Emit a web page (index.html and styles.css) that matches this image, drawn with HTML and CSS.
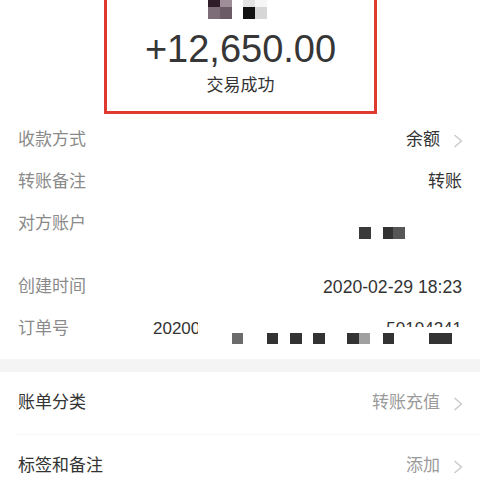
FILE: index.html
```html
<!DOCTYPE html>
<html lang="zh">
<head>
<meta charset="utf-8">
<title>账单详情</title>
<link rel="stylesheet" href="styles.css">
</head>
<body>
<div class="page">
  <header class="summary">
    <div class="card">
      <div class="avatar-row">
        <div class="mosaic mosaic-a"><i class="c1"></i><i class="c2"></i><i class="c3"></i><i class="c4"></i></div>
        <div class="mosaic mosaic-b"><i class="c1"></i><i class="c2"></i><i class="c3"></i><i class="c4"></i></div>
      </div>
      <div class="amount">+12,650.00</div>
      <div class="status">交易成功</div>
    </div>
  </header>

  <section class="details">
    <div class="row">
      <span class="label">收款方式</span>
      <span class="value-wrap"><span class="value">余额</span><svg class="chev" viewBox="0 0 10 14" width="10" height="14"><polyline points="1.5,1 8.5,7 1.5,13" fill="none" stroke="#c9c9c9" stroke-width="1.4"/></svg></span>
    </div>
    <div class="row plain">
      <span class="label">转账备注</span>
      <span class="value">转账</span>
    </div>
    <div class="row plain tall">
      <span class="label">对方账户</span>
      <span class="censor cx1"></span><span class="censor cx2"></span><span class="censor cx3"></span>
    </div>
    <div class="row plain">
      <span class="label">创建时间</span>
      <span class="value num date">2020-02-29 18:23</span>
    </div>
    <div class="row plain order">
      <span class="label order-label">订单号</span>
      <span class="order-head num">20200229</span>
      <span class="order-tail num">50104241</span>
      <span class="censor o1"></span><span class="censor o2"></span><span class="censor o3"></span><span class="censor o4"></span><span class="censor o5"></span><span class="censor o6"></span><span class="censor o7"></span><span class="censor o8"></span>
    </div>
  </section>

  <div class="band"></div>

  <section class="extras">
    <div class="row big divided">
      <span class="label dark">账单分类</span>
      <span class="value-wrap"><span class="value light">转账充值</span><svg class="chev" viewBox="0 0 10 14" width="10" height="14"><polyline points="1.5,1 8.5,7 1.5,13" fill="none" stroke="#c9c9c9" stroke-width="1.4"/></svg></span>
    </div>
    <div class="row big">
      <span class="label dark">标签和备注</span>
      <span class="value-wrap"><span class="value light">添加</span><svg class="chev" viewBox="0 0 10 14" width="10" height="14"><polyline points="1.5,1 8.5,7 1.5,13" fill="none" stroke="#c9c9c9" stroke-width="1.4"/></svg></span>
    </div>
  </section>
</div>
</body>
</html>
```

FILE: styles.css
```css
* { box-sizing: border-box; }
html, body { margin: 0; padding: 0; background: #fff; }
body {
  font-family: "Liberation Sans", "Noto Sans CJK SC", sans-serif;
  color: #333;
  width: 480px;
  overflow: hidden;
}
.page { width: 480px; }

.summary { display: flex; justify-content: center; }
.card {
  width: 273px;
  margin-left: 1px;
  border: 3px solid #df3a30;
  border-top: 0;
  padding-bottom: 13px;
  display: flex;
  flex-direction: column;
  align-items: center;
}
.avatar-row {
  display: flex;
  gap: 11px;
  height: 19px;
  padding-right: 6px;
}
.mosaic {
  display: grid;
  grid-template-columns: 12px 12px;
  grid-template-rows: 7px 12px;
}
.mosaic-a .c1 { background: #2f1e29; }
.mosaic-a .c2 { background: #9e8e98; }
.mosaic-a .c3 { background: #7d6d78; }
.mosaic-a .c4 { background: #6b5b66; }
.mosaic-b .c1 { background: #e2e2e2; }
.mosaic-b .c2 { background: #f6f6f6; }
.mosaic-b .c3 { background: #121212; }
.mosaic-b .c4 { background: #d6d6d6; }

.amount {
  margin-top: 8px;
  font-size: 38px;
  line-height: 44px;
  color: #363636;
}
.status {
  margin-top: 3px;
  font-size: 17px;
  line-height: 24px;
  color: #333;
}

.details { margin-top: 5px; }
.row {
  position: relative;
  display: flex;
  justify-content: space-between;
  align-items: flex-start;
  height: 42px;
  padding: 9px 17px 9px 18px;
  font-size: 17px;
  line-height: 24px;
}
.row.plain { padding-right: 18px; }
.row.tall { height: 63px; }
.row.order { height: 51px; justify-content: flex-start; }
.label { color: #8a8a8a; }
.label.dark { color: #333; }
.value { color: #333; }
.value.light { color: #9a9a9a; }
.value-wrap { display: flex; align-items: center; gap: 13px; }
.chev { display: block; margin-top: 1px; }
.num { font-family: "Liberation Sans", sans-serif; }
.date { font-size: 17.6px; }

.order-label { width: 135px; flex: none; }
.order-head {
  display: block;
  width: 45px;
  overflow: hidden;
  white-space: nowrap;
  color: #333;
}
.order-tail {
  display: block;
  margin-left: auto;
  height: 10px;
  overflow: hidden;
  color: #333;
}

.censor { position: absolute; height: 11px; background: #333; }
.cx1 { top: 24px; left: 359px; width: 12px; height: 12px; background: #3a3a3a; }
.cx2 { top: 24px; left: 383px; width: 10px; height: 12px; background: #333; }
.cx3 { top: 24px; left: 393px; width: 12px; height: 12px; background: #565656; }
.o1 { top: 25px; left: 232px; width: 11px; background: #6b6b6b; }
.o2 { top: 25px; left: 267px; width: 11px; }
.o3 { top: 25px; left: 290px; width: 12px; }
.o4 { top: 25px; left: 313px; width: 12px; }
.o5 { top: 25px; left: 347px; width: 12px; }
.o6 { top: 25px; left: 359px; width: 11px; background: #a0a0a0; }
.o7 { top: 25px; left: 383px; width: 11px; }
.o8 { top: 25px; left: 429px; width: 23px; }

.band { height: 13px; background: #f4f4f4; }

.row.big { height: 63px; padding-top: 19px; padding-bottom: 20px; }
.row.divided::after {
  content: "";
  position: absolute;
  left: 15px;
  right: 0;
  bottom: 0;
  height: 1px;
  background: #f7f7f7;
}
```
